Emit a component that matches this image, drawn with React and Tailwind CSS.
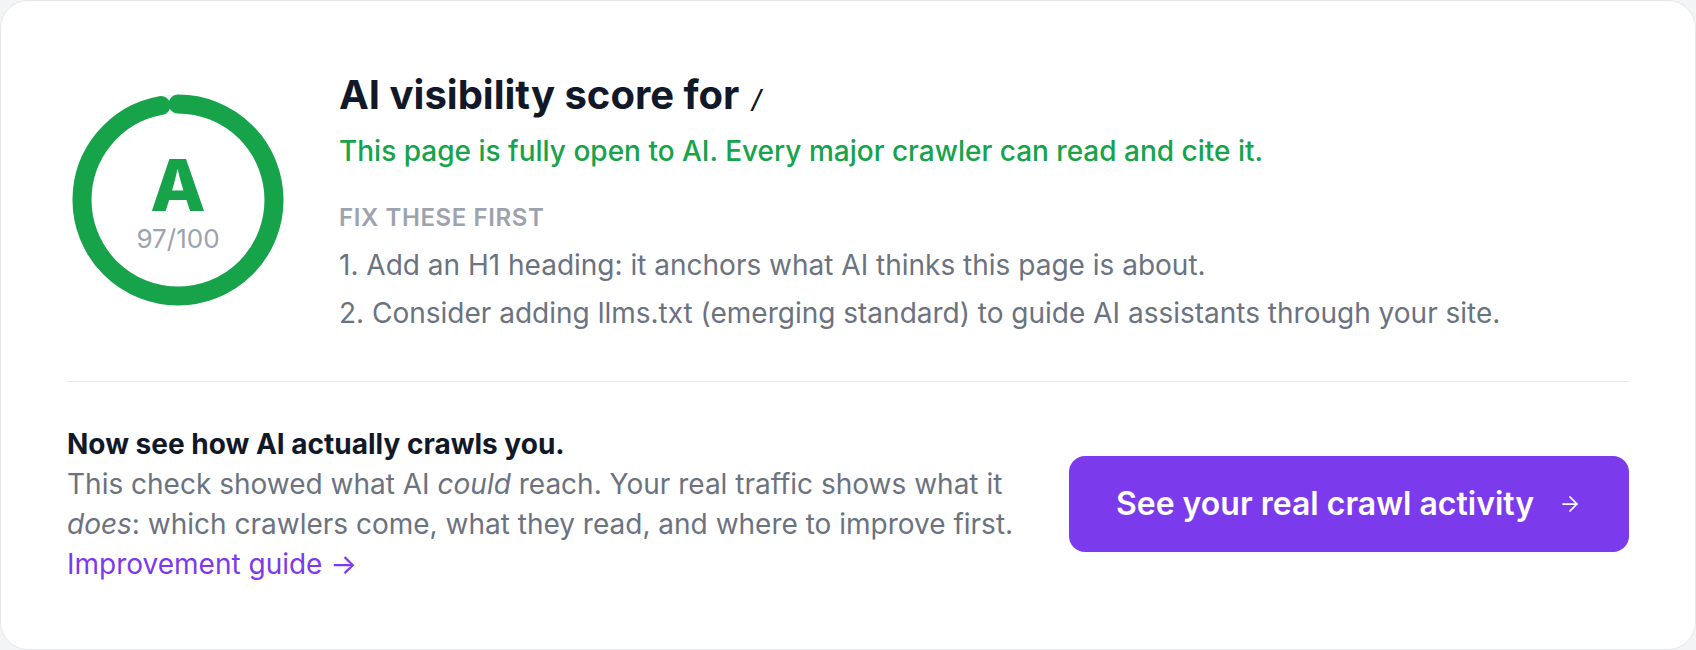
import { ArrowRight } from 'lucide-react';

function ScoreRing({ score, grade }) {
  const r = 96;
  const c = 2 * Math.PI * r;
  const len = (score / 100) * c;

  return (
    <div className="relative w-[222px] h-[222px] shrink-0 mt-[14px]">
      <svg width="222" height="222" viewBox="0 0 222 222">
        <circle cx="111" cy="111" r={r} fill="none" stroke="#eef0f3" strokeWidth="19" />
        <circle cx="111" cy="111" r={r} fill="none" stroke="#16a34a" strokeWidth="19"
                strokeLinecap="round"
                strokeDasharray={`${len} ${c}`}
                transform="rotate(-90 111 111)" />
      </svg>
      <div className="absolute inset-0 flex flex-col items-center justify-center">
        <span className="text-[72px] leading-[60px] font-extrabold text-[#16a34a] mt-[8px]">{grade}</span>
        <span className="text-[26px] leading-7 text-[#9ca3af] mt-[10px]">{score}/100</span>
      </div>
    </div>
  );
}

export default function App() {
  return (
    <div className="min-h-screen bg-[#f3f4f6] font-['Inter',sans-serif]">
      <div className="h-[650px] bg-white border border-gray-200 rounded-[28px] px-[66px] pt-[74px]">

        <div className="flex items-start gap-[50px]">
          <ScoreRing score={97} grade="A" />

          <div className="flex flex-col">
            <h2 className="text-[40px] leading-10 font-bold text-[#111827]">
              AI visibility score for{' '}
              <code className="font-['DejaVu_Sans_Mono',monospace] text-[27px] font-normal">/</code>
            </h2>
            <p className="mt-[15px] text-[28px] leading-8 font-medium text-[#16a34a]">
              This page is fully open to AI. Every major crawler can read and cite it.
            </p>
            <h3 className="mt-[37px] text-[24px] leading-7 font-semibold tracking-wide uppercase text-[#9ca3af]">
              Fix these first
            </h3>
            <ol className="mt-[9px] text-[28px] leading-[48px] text-[#6b7280]">
              <li>1. Add an H1 heading: it anchors what AI thinks this page is about.</li>
              <li>2. Consider adding llms.txt (emerging standard) to guide AI assistants through your site.</li>
            </ol>
          </div>
        </div>

        <hr className="mt-[44px] border-t border-gray-200" />

        <div className="mt-[42px] flex items-center gap-12">
          <div className="flex-1">
            <p className="text-[28px] leading-10 font-bold text-[#111827]">
              Now see how AI actually crawls you.
            </p>
            <p className="text-[28px] leading-10 text-[#6b7280]">
              This check showed what AI <em>could</em> reach. Your real traffic shows what it{' '}
              <em>does</em>: which crawlers come, what they read, and where to improve first.
            </p>
            <a href="#" className="block text-[28px] leading-10 text-[#7c3aed]">
              Improvement guide →
            </a>
          </div>

          <button type="button"
                  className="w-[560px] h-[96px] shrink-0 rounded-2xl bg-[#7c3aed] text-white flex items-center justify-center gap-6">
            <span className="text-[32px] font-semibold">See your real crawl activity</span>
            <ArrowRight size={24} strokeWidth={1.75} />
          </button>
        </div>
      </div>
    </div>
  );
}
